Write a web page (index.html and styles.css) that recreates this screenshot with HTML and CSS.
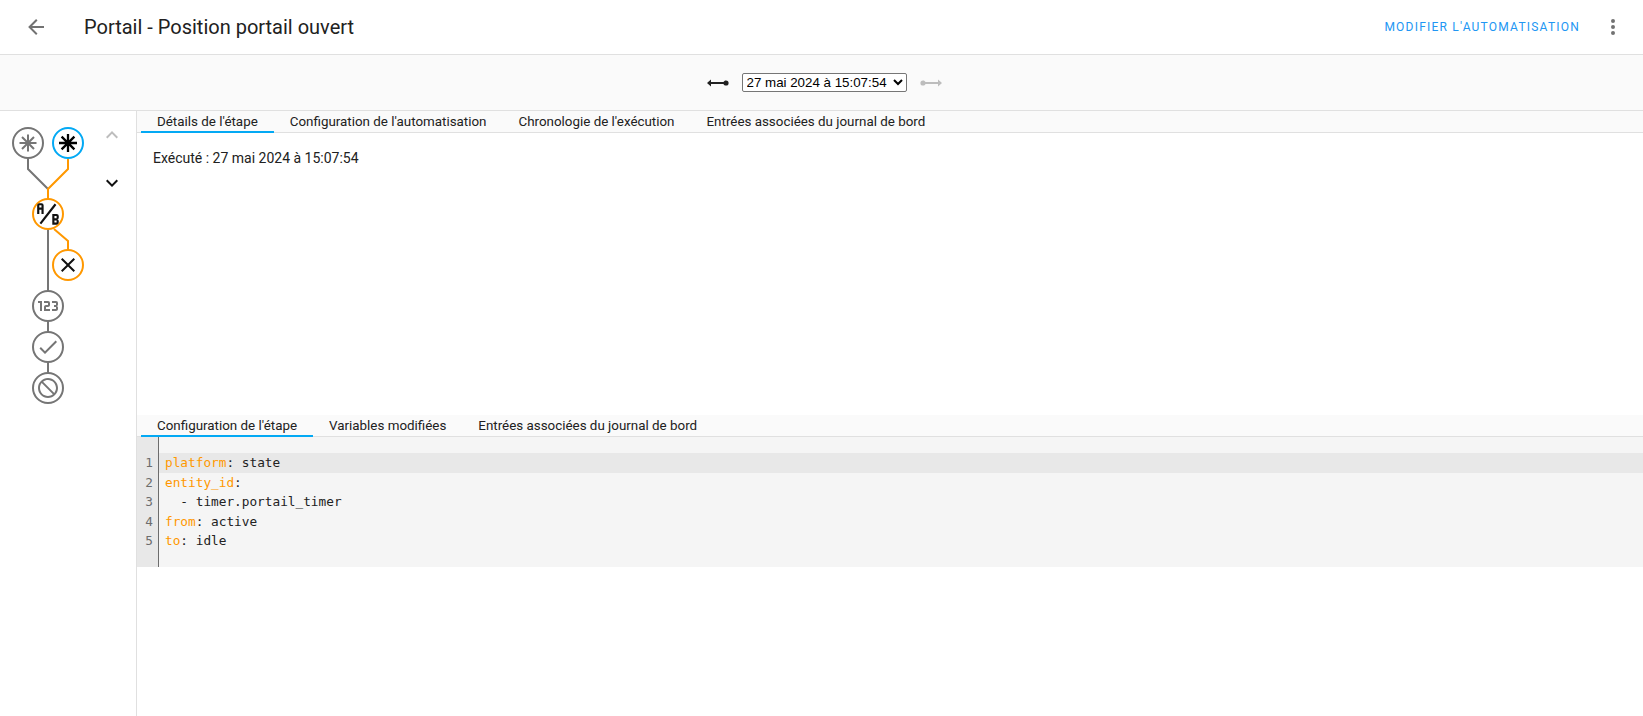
FILE: index.html
```html
<!DOCTYPE html>
<html lang="fr">
<head>
<meta charset="utf-8">
<title>Portail - Position portail ouvert</title>
<link rel="stylesheet" href="styles.css">
</head>
<body>
<div class="app">
  <header class="topbar">
    <svg class="icon icon-back" viewBox="0 0 24 24"><path d="M20,11V13H8L13.5,18.5L12.08,19.92L4.16,12L12.08,4.08L13.5,5.5L8,11H20Z"/></svg>
    <h1 class="title">Portail - Position portail ouvert</h1>
    <a class="edit-link">MODIFIER L'AUTOMATISATION</a>
    <svg class="icon icon-more" viewBox="0 0 24 24"><path d="M12,16A2,2 0 0,1 14,18A2,2 0 0,1 12,20A2,2 0 0,1 10,18A2,2 0 0,1 12,16M12,10A2,2 0 0,1 14,12A2,2 0 0,1 12,14A2,2 0 0,1 10,12A2,2 0 0,1 12,10M12,4A2,2 0 0,1 14,6A2,2 0 0,1 12,8A2,2 0 0,1 10,6A2,2 0 0,1 12,4Z"/></svg>
  </header>
  <div class="picker">
    <svg class="icon icon-dark" viewBox="0 0 24 24"><path d="M1,12L5,15.5V13H17.5C17.9,14 18.8,14.6 20,14.6A2.6,2.6 0 0,0 22.6,12A2.6,2.6 0 0,0 20,9.4C18.8,9.4 17.9,10 17.5,11H5V8.5L1,12Z"/></svg>
    <select class="run-select"><option>27 mai 2024 à 15:07:54</option></select>
    <svg class="icon icon-faint" viewBox="0 0 24 24"><path d="M23,12L19,15.5V13H6.5C6.1,14 5.2,14.6 4,14.6A2.6,2.6 0 0,1 1.4,12A2.6,2.6 0 0,1 4,9.4C5.2,9.4 6.1,10 6.5,11H19V8.5L23,12Z"/></svg>
  </div>
  <main class="main">
    <aside class="sidebar">
      <svg class="graph" viewBox="0 0 136 300" width="136" height="300">
        <g class="wire wire-gray">
          <path d="M28 47V58L48 78"/>
          <path d="M48 118V195"/>
          <path d="M48 210V236M48 250V277"/>
        </g>
        <g class="wire wire-orange">
          <path d="M68 47V58L48 78V90"/>
          <path d="M54 118L68 130V142"/>
        </g>
        <g class="node node-gray" transform="translate(28 32)">
          <circle r="15"/>
          <g class="spokes"><path d="M0-8.5V8.5M-8.5 0H8.5M-6-6L6 6M-6 6L6-6"/></g>
        </g>
        <g class="node node-blue" transform="translate(68 32)">
          <circle r="15"/>
          <g class="spokes"><path d="M0-9V9M-9 0H9M-6.4-6.4L6.4 6.4M-6.4 6.4L6.4-6.4"/></g>
        </g>
        <g class="node node-orange" transform="translate(48 103)">
          <circle r="15"/>
          <path transform="translate(-13 -13) scale(1.08)" d="M4 2A2 2 0 0 0 2 4V12H4V8H6V12H8V4A2 2 0 0 0 6 2H4M4 4H6V6H4M22 15.5V14A2 2 0 0 0 20 12H16V22H20A2 2 0 0 0 22 20V18.5A1.54 1.54 0 0 0 20.5 17A1.54 1.54 0 0 0 22 15.5M20 20H18V18H20V20M20 16H18V14H20M5.79 21.61L4.21 20.39L18.21 2.39L19.79 3.61Z"/>
        </g>
        <g class="node node-orange" transform="translate(68 154)">
          <circle r="15"/>
          <path transform="translate(-12 -12)" d="M19,6.41L17.59,5L12,10.59L6.41,5L5,6.41L10.59,12L5,17.59L6.41,19L12,13.41L17.59,19L19,17.59L13.41,12L19,6.41Z"/>
        </g>
        <g class="node node-gray" transform="translate(48 195)">
          <circle r="15"/>
          <path transform="translate(-12 -12)" d="M4,17V9H2V7H6V17H4M22,15C22,16.11 21.1,17 20,17H16V15H20V13H18V11H20V9H16V7H20A2,2 0 0,1 22,9V10.5A1.5,1.5 0 0,1 20.5,12A1.5,1.5 0 0,1 22,13.5V15M14,15V17H8V13C8,11.89 8.9,11 10,11H12V9H8V7H12A2,2 0 0,1 14,9V11C14,12.11 13.1,13 12,13H10V15H14Z"/>
        </g>
        <g class="node node-gray" transform="translate(48 236)">
          <circle r="15"/>
          <path transform="translate(-12 -12)" d="M21,7L9,19L3.5,13.5L4.91,12.09L9,16.17L19.59,5.59L21,7Z"/>
        </g>
        <g class="node node-gray" transform="translate(48 277)">
          <circle r="15"/>
          <path transform="translate(-12 -12)" d="M12 2C17.5 2 22 6.5 22 12S17.5 22 12 22 2 17.5 2 12 6.5 2 12 2M12 4C10.1 4 8.4 4.6 7.1 5.7L18.3 16.9C19.3 15.5 20 13.8 20 12C20 7.6 16.4 4 12 4M16.9 18.3L5.7 7.1C4.6 8.4 4 10.1 4 12C4 16.4 7.6 20 12 20C13.9 20 15.6 19.4 16.9 18.3Z"/>
        </g>
      </svg>
      <div class="nav-arrows">
        <svg class="icon icon-faint" viewBox="0 0 24 24"><path d="M7.41,15.41L12,10.83L16.59,15.41L18,14L12,8L6,14L7.41,15.41Z"/></svg>
        <svg class="icon icon-black" viewBox="0 0 24 24"><path d="M7.41,8.58L12,13.17L16.59,8.58L18,10L12,16L6,10L7.41,8.58Z"/></svg>
      </div>
    </aside>
    <section class="content">
      <nav class="tabs">
        <span class="tab tab-active">Détails de l'étape</span>
        <span class="tab">Configuration de l'automatisation</span>
        <span class="tab">Chronologie de l'exécution</span>
        <span class="tab">Entrées associées du journal de bord</span>
      </nav>
      <div class="details">Exécuté : 27 mai 2024 à 15:07:54</div>
      <nav class="tabs">
        <span class="tab tab-active">Configuration de l'étape</span>
        <span class="tab">Variables modifiées</span>
        <span class="tab">Entrées associées du journal de bord</span>
      </nav>
      <div class="code">
        <div class="line line-current"><span class="ln">1</span><span class="src"><span class="key">platform</span>: state</span></div>
        <div class="line"><span class="ln">2</span><span class="src"><span class="key">entity_id</span>:</span></div>
        <div class="line"><span class="ln">3</span><span class="src">  - timer.portail_timer</span></div>
        <div class="line"><span class="ln">4</span><span class="src"><span class="key">from</span>: active</span></div>
        <div class="line"><span class="ln">5</span><span class="src"><span class="key">to</span>: idle</span></div>
      </div>
    </section>
  </main>
</div>
</body>
</html>
```
FILE: styles.css
```css
* { box-sizing: border-box; }
html, body { margin: 0; height: 100%; background: #fff; overflow: hidden; }
body { font-family: Roboto, "Liberation Sans", sans-serif; color: #212121; }
.app { display: flex; flex-direction: column; height: 716px; }
.icon { width: 24px; height: 24px; flex: none; display: block; }
.topbar { display: flex; align-items: center; height: 55px; padding-left: 24px; padding-right: 18px; border-bottom: 1px solid #e0e0e0; flex: none; }
.icon-back { fill: #727272; }
.icon-more { fill: #727272; margin-left: 21px; }
.title { margin: 0 0 0 36px; font-size: 20px; font-weight: 400; flex: 1; }
.edit-link { color: #2196f3; font-size: 12px; font-weight: 400; letter-spacing: 1.22px; }
.picker { display: flex; align-items: center; justify-content: center; gap: 12px; height: 56px; background: #fafafa; border-bottom: 1px solid #e0e0e0; flex: none; padding-left: 5px; }
.icon-dark { fill: #212121; }
.icon-faint { fill: #bdbdbd; }
.icon-black { fill: #111; }
.run-select { width: 165px; height: 19px; font-family: "Liberation Sans", sans-serif; font-size: 13.33px; color: #000; background: #fff; border: 1px solid #767676; border-radius: 2px; padding: 0; }
.main { display: flex; flex: 1; min-height: 0; }
.sidebar { width: 137px; flex: none; border-right: 1px solid #e0e0e0; display: flex; align-items: flex-start; position: relative; }
.graph { display: block; flex: none; position: absolute; left: 0; top: 0; }
.nav-arrows { display: flex; flex-direction: column; gap: 24px; margin-left: 100px; margin-top: 12px; }
.wire path { fill: none; stroke-width: 2; }
.wire-gray path { stroke: #757575; }
.wire-orange path { stroke: #ff9800; }
.node circle { fill: #fff; stroke-width: 2; }
.node-gray circle { stroke: #757575; }
.node-gray path { fill: #757575; }
.node-gray .spokes path { fill: none; stroke: #757575; stroke-width: 2; }
.node-blue circle { stroke: #03a9f4; }
.node-blue .spokes path { fill: none; stroke: #000; stroke-width: 2.3; }
.node-orange circle { stroke: #ff9800; }
.node-orange path { fill: #111; }
.content { flex: 1; min-width: 0; display: flex; flex-direction: column; }
.tabs { display: flex; height: 22px; padding-left: 4px; background: #fafafa; border-bottom: 1px solid #e0e0e0; flex: none; font-size: 13.38px; }
.tab { padding: 0 16px; height: 22px; line-height: 21px; white-space: nowrap; }
.tab-active { border-bottom: 2px solid #03a9f4; }
.details { height: 282px; padding: 15px 16px; font-size: 14px; line-height: 20px; flex: none; }
.code { background: #f5f5f5; height: 130px; padding-top: 16px; flex: none; background-image: linear-gradient(90deg, #e8e8e8 21px, #6c6c6c 21px, #6c6c6c 22px, transparent 22px); font-family: "DejaVu Sans Mono", monospace; font-size: 12.75px; line-height: 19.5px; }
.line { display: flex; height: 19.5px; }
.line-current { background: linear-gradient(90deg, #e8e8e8 21px, #6c6c6c 21px, #6c6c6c 22px, #e8e8e8 22px); }
.ln { width: 16px; margin-right: 12px; text-align: right; color: #6d6d6d; flex: none; }
.src { white-space: pre; color: #222; }
.key { color: #ff9800; }
```
